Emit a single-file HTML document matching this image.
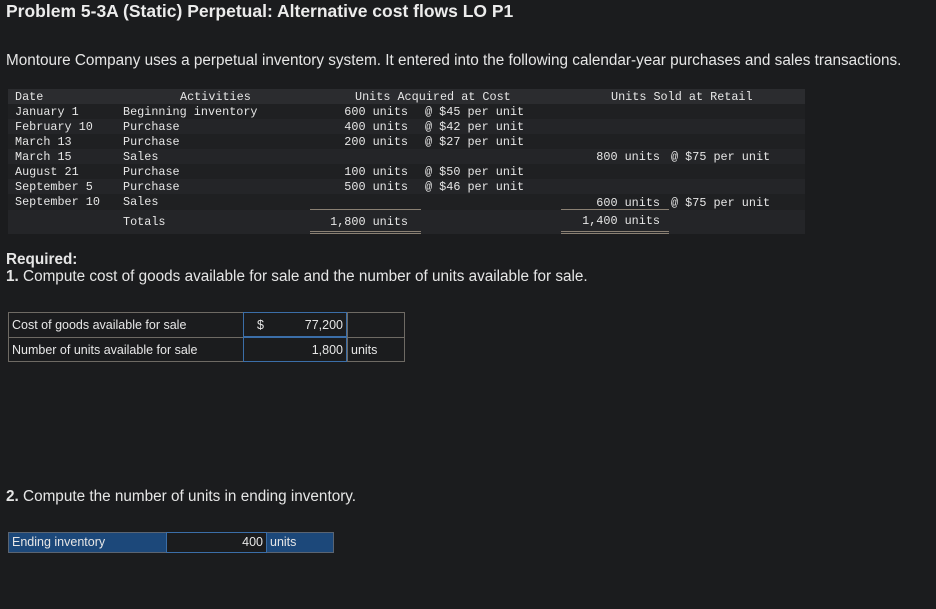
<!DOCTYPE html>
<html><head><style>
body{margin:0;width:936px;height:609px;background:#1b1c1e;color:#e6e6e6;font-family:"Liberation Sans",sans-serif;position:relative;overflow:hidden}
.a{position:absolute;white-space:pre}
.m{font-family:"Liberation Mono",monospace;font-size:11.8px;color:#e6e6e6;font-weight:500}
.row{position:absolute;left:8px;width:797px;height:15px}
.hr{position:absolute;background:#8a8073;height:1px}
</style></head><body>
<div class="a" style="left:6px;top:1px;font-size:17.5px;font-weight:bold;color:#ececec">Problem 5-3A (Static) Perpetual: Alternative cost flows LO P1</div>
<div class="a" style="left:6px;top:52px;font-size:15.3px;color:#e6e6e6">Montoure Company uses a perpetual inventory system. It entered into the following calendar-year purchases and sales transactions.</div>

<div class="row" style="top:89px;background:#2b2c2f"></div>
<div class="row" style="top:104px;height:130px;background:#1f2022"></div>
<div class="row" style="top:119px;background:#242528"></div>
<div class="row" style="top:149px;background:#242528"></div>
<div class="row" style="top:179px;background:#242528"></div>
<div class="row" style="top:210px;height:24px;background:#242528"></div>

<div class="a m" style="left:15px;top:90px">Date</div>
<div class="a m" style="left:180px;top:90px">Activities</div>
<div class="a m" style="left:355px;top:90px">Units Acquired at Cost</div>
<div class="a m" style="left:611px;top:90px">Units Sold at Retail</div>

<div class="a m" style="left:15px;top:105px;line-height:15px">January 1
February 10
March 13
March 15
August 21
September 5
September 10</div>
<div class="a m" style="left:123px;top:105px;line-height:15px">Beginning inventory
Purchase
Purchase
Sales
Purchase
Purchase
Sales</div>
<div class="a m" style="left:123px;top:215px">Totals</div>
<div class="a m" style="left:300px;width:108px;text-align:right;top:105px;line-height:15px">600 units
400 units
200 units

100 units
500 units</div>
<div class="a m" style="left:425px;top:105px;line-height:15px">@ $45 per unit
@ $42 per unit
@ $27 per unit

@ $50 per unit
@ $46 per unit</div>
<div class="a m" style="left:300px;width:108px;text-align:right;top:215px">1,800 units</div>
<div class="a m" style="left:560px;width:100px;text-align:right;top:150px">800 units</div>
<div class="a m" style="left:671px;top:150px">@ $75 per unit</div>
<div class="a m" style="left:560px;width:100px;text-align:right;top:196px">600 units</div>
<div class="a m" style="left:671px;top:196px">@ $75 per unit</div>
<div class="a m" style="left:560px;width:100px;text-align:right;top:214px">1,400 units</div>
<div class="hr" style="left:310px;width:111px;top:209px"></div>
<div class="hr" style="left:310px;width:111px;top:231px"></div>
<div class="hr" style="left:310px;width:111px;top:233px"></div>
<div class="hr" style="left:561px;width:108px;top:209px"></div>
<div class="hr" style="left:561px;width:108px;top:231px"></div>
<div class="hr" style="left:561px;width:108px;top:233px"></div>

<div class="a" style="left:6px;top:251px;font-size:15.3px;font-weight:bold">Required:</div>
<div class="a" style="left:6px;top:268px;font-size:15.3px"><b>1.</b> Compute cost of goods available for sale and the number of units available for sale.</div>

<div style="position:absolute;left:8px;top:312px;width:397px;height:50px;border:1px solid #6e6a64;box-sizing:border-box"></div>
<div style="position:absolute;left:8px;top:337px;width:397px;height:1px;background:#6e6a64"></div>
<div style="position:absolute;left:243px;top:312px;width:104px;height:25px;border:1px solid #3b6ea8;box-sizing:border-box"></div>
<div style="position:absolute;left:243px;top:337px;width:104px;height:25px;border:1px solid #3b6ea8;box-sizing:border-box"></div>
<div style="position:absolute;left:347px;top:312px;width:1px;height:50px;background:#6e6a64"></div>
<div class="a" style="left:12px;top:318px;font-size:12.5px;color:#e8e8e8">Cost of goods available for sale</div>
<div class="a" style="left:12px;top:343px;font-size:12.5px;color:#e8e8e8">Number of units available for sale</div>
<div class="a" style="left:257px;top:318px;font-size:12.5px">$</div>
<div class="a" style="left:280px;width:63px;text-align:right;top:318px;font-size:12.5px">77,200</div>
<div class="a" style="left:280px;width:63px;text-align:right;top:343px;font-size:12.5px">1,800</div>
<div class="a" style="left:351px;top:343px;font-size:12.5px">units</div>

<div class="a" style="left:6px;top:488px;font-size:15.3px"><b>2.</b> Compute the number of units in ending inventory.</div>

<div style="position:absolute;left:8px;top:532px;width:326px;height:21px;background:#1c487a;border:1px solid #5a6472;box-sizing:border-box"></div>
<div style="position:absolute;left:166px;top:532px;width:101px;height:21px;background:#1b1c1e;border:1px solid #3b6ea8;box-sizing:border-box"></div>
<div class="a" style="left:12px;top:535px;font-size:12.5px">Ending inventory</div>
<div class="a" style="left:200px;width:63px;text-align:right;top:535px;font-size:12.5px">400</div>
<div class="a" style="left:270px;top:535px;font-size:12.5px">units</div>
</body></html>
